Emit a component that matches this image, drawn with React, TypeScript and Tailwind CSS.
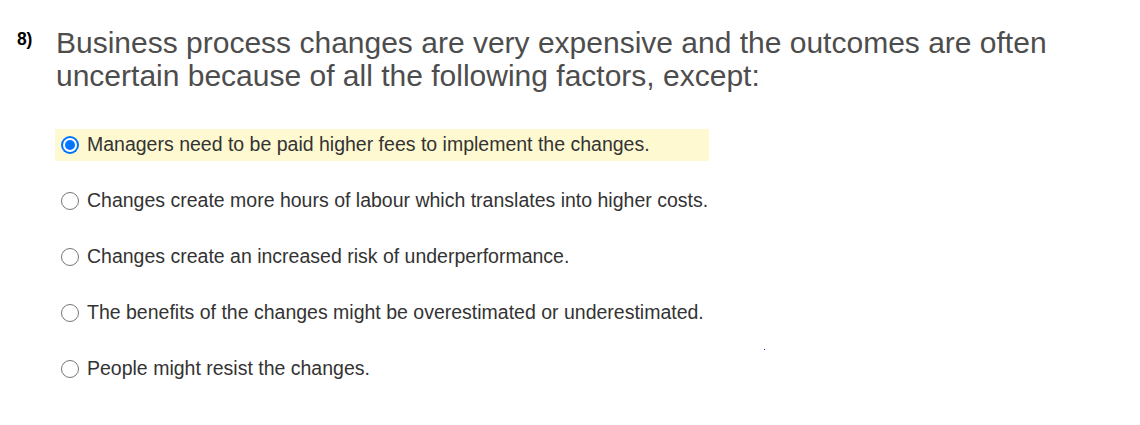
import React from "react";

const options = [
  "Managers need to be paid higher fees to implement the changes.",
  "Changes create more hours of labour which translates into higher costs.",
  "Changes create an increased risk of underperformance.",
  "The benefits of the changes might be overestimated or underestimated.",
  "People might resist the changes.",
];

function Radio({ checked }: { checked: boolean }) {
  if (checked) {
    return (
      <span className="flex items-center justify-center w-[18px] h-[18px] rounded-full bg-[#0075ff] shrink-0">
        <span className="flex items-center justify-center w-[14px] h-[14px] rounded-full bg-white">
          <span className="w-[10px] h-[10px] rounded-full bg-[#0075ff]" />
        </span>
      </span>
    );
  }
  return <span className="w-[18px] h-[18px] rounded-full border border-[#767676] bg-white shrink-0" />;
}

export default function App() {
  return (
    <div className="relative w-[1140px] h-[425px] bg-white font-['Liberation_Sans',Arial,sans-serif]">
      <div className="flex pt-[26px]">
        <div className="w-[56px] pl-[17px] pt-[5px] text-[17.5px] font-bold text-black leading-none tracking-[-0.3px]">8)</div>
        <div className="flex-1">
          <div className="w-[1060px] text-[30px] leading-[33px] text-[#4d4d4d]">
            Business process changes are very expensive and the outcomes are often uncertain because of all the following factors, except:
          </div>
          <div className="mt-[37px] flex flex-col gap-[24px] -ml-px">
            {options.map((o, i) => (
              <div
                key={i}
                className={`flex items-center h-[32px] w-[654px] pl-[6px] ${i === 0 ? "bg-[#fff9d1]" : ""}`}
              >
                <Radio checked={i === 0} />
                <span className="ml-[8px] whitespace-nowrap text-[19.5px] text-[#333333]">{o}</span>
              </div>
            ))}
          </div>
        </div>
      </div>
      <div className="absolute left-[764px] top-[349px] w-px h-px bg-[#2222ff]" />
    </div>
  );
}
